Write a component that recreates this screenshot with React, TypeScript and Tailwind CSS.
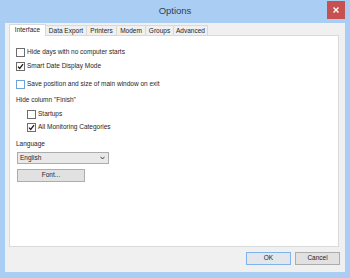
import React from "react";

const tabs = [
  { label: "Interface", w: "w-[37px]", active: true },
  { label: "Data Export", w: "w-[42px]" },
  { label: "Printers", w: "w-[31px]" },
  { label: "Modem", w: "w-[30px]" },
  { label: "Groups", w: "w-[29px]" },
  { label: "Advanced", w: "w-[35px]" },
];

function Check({ checked, focus }: { checked?: boolean; focus?: boolean }) {
  return (
    <span
      className={`flex h-[9px] w-[9px] shrink-0 items-center justify-center border bg-white ${
        focus ? "border-[#6fa3d8]" : "border-[#6d6d6d]"
      }`}
    >
      {checked && (
        <svg width="7" height="7" viewBox="0 0 7 7">
          <path d="M1 3.6 L2.7 5.4 L6 1.2" fill="none" stroke="#1c1c1c" strokeWidth="1.3" />
        </svg>
      )}
    </span>
  );
}

function CheckRow({
  label,
  checked,
  focus,
  className = "",
}: {
  label: string;
  checked?: boolean;
  focus?: boolean;
  className?: string;
}) {
  return (
    <div className={`flex h-[13px] items-center gap-[2px] ${className}`}>
      <Check checked={checked} focus={focus} />
      <span>{label}</span>
    </div>
  );
}

export default function App() {
  return (
    <div className="flex h-[278px] w-[350px] flex-col bg-[#a9cdf3] font-['Liberation_Sans',Arial,sans-serif] text-[6.5px] leading-none text-[#1e1e1e]">
      {/* title bar */}
      <div className="grid h-[23px] grid-cols-[1fr_auto_1fr] items-start">
        <div />
        <div className="pt-[6px] text-[9.5px] text-[#2e4259]">Options</div>
        <div className="flex justify-end pr-[5px] pt-[1px]">
          <div className="flex h-[18px] w-[18px] items-center justify-center bg-[#c75050]">
            <svg width="6" height="6" viewBox="0 0 6 6">
              <path d="M0.5 0.5 L5.5 5.5 M5.5 0.5 L0.5 5.5" stroke="#fff" strokeWidth="1.4" />
            </svg>
          </div>
        </div>
      </div>

      {/* client area */}
      <div className="mx-[5px] mb-[6px] flex flex-1 flex-col bg-[#f0f0f0] pl-[4px] pr-[6px] pt-[1px]">
        <div className="flex h-[11px] items-end">
          {tabs.map((t) =>
            t.active ? (
              <div
                key={t.label}
                className={`relative z-10 -mb-px flex h-[12px] items-center justify-center border border-b-0 border-[#d9d9d9] bg-white ${t.w}`}
              >
                {t.label}
              </div>
            ) : (
              <div
                key={t.label}
                className={`-ml-px flex h-[10px] items-center justify-center border border-b-0 border-[#d9d9d9] bg-[#f0f0f0] pt-[1px] ${t.w}`}
              >
                {t.label}
              </div>
            )
          )}
        </div>

        <div className="flex h-[212px] flex-col border border-[#d9d9d9] bg-white pl-[6px] pt-[10px]">
          <CheckRow label="Hide days with no computer starts" />
          <CheckRow label="Smart Date Display Mode" checked className="mt-[1px]" />
          <CheckRow label="Save position and size of main window on exit" focus className="mt-[5px]" />
          <div className="mt-[3px] flex h-[13px] items-center">Hide column "Finish"</div>
          <CheckRow label="Startups" className="mt-[1px] pl-[11px]" />
          <CheckRow label="All Monitoring Categories" checked className="pl-[11px]" />
          <div className="mt-[4px] flex h-[13px] items-center">Language</div>
          <div className="ml-px mt-[1px] flex h-[12px] w-[92px] items-center justify-between border border-[#acacac] bg-[#e9e9e9] pl-[2px] pr-[3px]">
            <span>English</span>
            <svg width="5" height="4" viewBox="0 0 5 4">
              <path d="M0.5 0.8 L2.5 3 L4.5 0.8" fill="none" stroke="#333" strokeWidth="0.9" />
            </svg>
          </div>
          <div className="ml-px mt-[5px] flex h-[13px] w-[68px] items-center justify-center border border-[#adadad] bg-[#e1e1e1]">
            Font...
          </div>
        </div>

        <div className="mt-[5px] flex justify-end gap-[4px] -mr-px">
          <div className="flex h-[13px] w-[45px] items-center justify-center border border-[#7eb4ea] bg-[#e3e6ea]">
            OK
          </div>
          <div className="flex h-[13px] w-[45px] items-center justify-center border border-[#adadad] bg-[#e1e1e1]">
            Cancel
          </div>
        </div>
      </div>
    </div>
  );
}
